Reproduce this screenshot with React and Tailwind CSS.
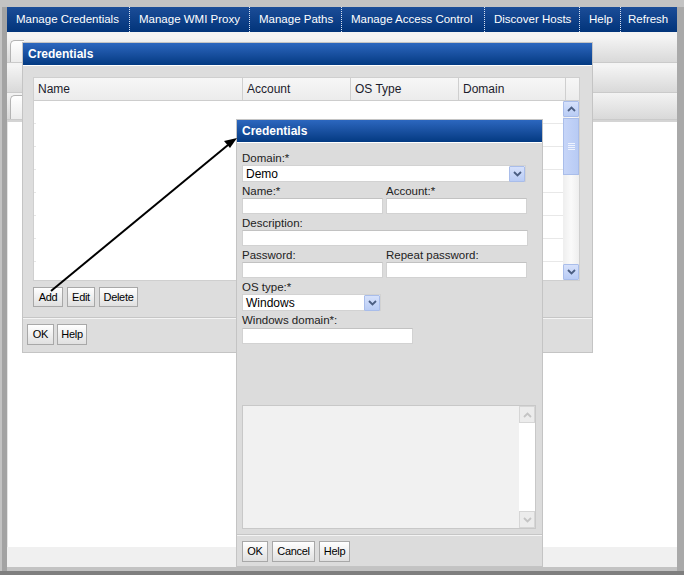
import React from 'react';

const Chevron = ({ up, color = '#4b5e82' }) => (
  <svg width="9" height="6" viewBox="0 0 9 6">
    <path d={up ? 'M1 5 L4.5 1.5 L8 5' : 'M1 1 L4.5 4.5 L8 1'} fill="none" stroke={color} strokeWidth="1.8" />
  </svg>
);

const BlueBtn = ({ up }) => (
  <div className="w-[16px] h-[16px] flex items-center justify-center border border-[#a9bdea] bg-gradient-to-b from-[#d6e1fb] to-[#b9ccf5] rounded-[1px]">
    <Chevron up={up} />
  </div>
);

const Btn = ({ w, h = 'h-[21px]', children }) => (
  <div
    className={`${w} ${h} flex items-center justify-center border border-[#a8a8a8] bg-gradient-to-b from-white to-[#e0e0e0] text-[11px] tracking-[-0.3px] text-black`}
  >
    {children}
  </div>
);

const Label = ({ children, w = '', h = 'h-[16px]' }) => (
  <div className={`${w} ${h} leading-[18px] text-[11.5px] text-[#222]`}>{children}</div>
);

const Input = ({ w }) => (
  <div className={`${w} h-[16px] bg-white border border-[#d2d2d2] border-t-[#c2c2c2]`} />
);

const Select = ({ w, value }) => (
  <div className={`${w} h-[17px] bg-white border border-[#d2d2d2] flex items-center justify-between`}>
    <span className="pl-[3px] text-[12px] text-black leading-none">{value}</span>
    <BlueBtn />
  </div>
);

const navItems = [
  ['Manage Credentials', 'w-[123px]'],
  ['Manage WMI Proxy', 'w-[120px]'],
  ['Manage Paths', 'w-[92px]'],
  ['Manage Access Control', 'w-[143px]'],
  ['Discover Hosts', 'w-[95px]'],
  ['Help', 'w-[41px]'],
];

const Band = ({ h, tab }) => (
  <div className={`${h} flex bg-gradient-to-b from-[#f3f3f3] via-[#e6e6e6] to-[#d9d9d9] border-b border-[#cacaca]`}>
    {tab && (
      <div className="ml-[3px] mt-[2px] w-[14px] rounded-tl-[5px] border-l border-t border-[#b4b4b4] bg-gradient-to-b from-white to-[#ececec]" />
    )}
  </div>
);

export default function App() {
  const rows = [0, 1, 2, 3, 4, 5, 6];
  return (
    <div className="relative w-[684px] h-[575px] bg-[#c3c3c3] flex flex-col font-['Liberation_Sans',Arial,sans-serif]">
      <div className="flex h-[571px]">
        <div className="w-[2px]" />
        <div className="w-[5px] mt-[7px] bg-[#a3a3a3]" />
        <div className="mt-[7px] w-[670px] h-[560px] bg-white relative flex flex-col overflow-hidden">
          {/* top menu */}
          <div className="h-[25px] flex bg-gradient-to-b from-[#1b4d98] to-[#02347a] text-white text-[11.5px]">
            {navItems.map(([t, w]) => (
              <div key={t} className={`${w} flex items-center pl-[9px] border-r border-dotted border-[#d8e2f2]`}>
                {t}
              </div>
            ))}
            <div className="flex-1 flex items-center pl-[7px]">Refresh</div>
          </div>

          {/* tab strips */}
          <div className="h-[90px] flex flex-col bg-[#f4f4f4]">
            <div className="h-[6px]" />
            <Band h="h-[25px]" tab />
            <div className="h-[4px]" />
            <Band h="h-[26px]" />
            <Band h="h-[27px]" tab />
            <div className="h-[2px] bg-[#d4d4d4]" />
          </div>

          <div className="flex-1 flex">
            <div className="w-[1px] bg-[#e4e4e4]" />
          </div>
          <div className="h-[20px] bg-[#f0f0f0]" />

          {/* Credentials list dialog */}
          <div className="absolute left-[15px] top-[35px] w-[571px] h-[311px] border border-[#c4c4c4] bg-[#dddddd] flex flex-col">
            <div className="h-[23px] flex items-center pl-[5px] bg-gradient-to-b from-[#2c67bf] to-[#033a82] text-white text-[12px] font-bold border-b border-white">
              Credentials
            </div>
            <div className="pl-[10px] pt-[11px] flex flex-col">
              <div className="w-[547px] h-[204px] border border-[#cfcfcf] flex flex-col bg-white">
                <div className="h-[23px] flex bg-gradient-to-b from-[#f7f7f7] to-[#ececec] border-b border-[#cdcdcd] text-[12px] text-[#1c1c2c]">
                  <div className="w-[209px] pl-[4px] flex items-center border-r border-[#cfcfcf]">Name</div>
                  <div className="w-[108px] pl-[4px] flex items-center border-r border-[#cfcfcf]">Account</div>
                  <div className="w-[108px] pl-[4px] flex items-center border-r border-[#cfcfcf]">OS Type</div>
                  <div className="w-[107px] pl-[4px] flex items-center border-r border-[#cfcfcf]">Domain</div>
                  <div className="flex-1" />
                </div>
                <div className="flex-1 flex">
                  <div className="flex-1 flex flex-col">
                    {rows.map((r) => (
                      <div key={r} className="h-[23px] flex">
                        <div className="w-[2px] border-b border-[#e6e6e6]" />
                        <div className="flex-1" />
                        <div className="w-[107px] border-b border-[#e8e8e8]" />
                      </div>
                    ))}
                  </div>
                  <div className="w-[16px] flex flex-col bg-gradient-to-r from-[#eeeeee] via-[#fafafa] to-[#eeeeee]">
                    <BlueBtn up />
                    <div className="h-[57px] mt-[1px] border border-[#a9bdea] bg-gradient-to-r from-[#c6d5f8] to-[#b8cbf4] flex items-center justify-center">
                      <div className="flex flex-col gap-[1px]">
                        <div className="w-[7px] h-[1px] bg-[#eef3fe]" />
                        <div className="w-[7px] h-[1px] bg-[#eef3fe]" />
                        <div className="w-[7px] h-[1px] bg-[#eef3fe]" />
                        <div className="w-[7px] h-[1px] bg-[#eef3fe]" />
                      </div>
                    </div>
                    <div className="flex-1" />
                    <BlueBtn />
                  </div>
                </div>
              </div>
              <div className="mt-[6px] flex gap-[4px]">
                <Btn w="w-[30px]" h="h-[20px]">Add</Btn>
                <Btn w="w-[28px]" h="h-[20px]">Edit</Btn>
                <Btn w="w-[39px]" h="h-[20px]">Delete</Btn>
              </div>
            </div>
            <div className="mt-[10px] border-t border-[#c6c6c6] border-b border-b-[#f4f4f4]" />
            <div className="pl-[4px] pt-[5px] flex gap-[3px]">
              <Btn w="w-[27px]">OK</Btn>
              <Btn w="w-[30px]">Help</Btn>
            </div>
          </div>

          {/* Credentials edit dialog */}
          <div className="absolute left-[229px] top-[112px] w-[307px] h-[448px] border border-[#c4c4c4] bg-[#dcdcdc] flex flex-col">
            <div className="h-[23px] flex items-center pl-[5px] bg-gradient-to-b from-[#2c67bf] to-[#033a82] text-white text-[12px] font-bold border-b border-white">
              Credentials
            </div>
            <div className="px-[5px] pt-[6px] flex flex-col">
              <Label>Domain:*</Label>
              <Select w="w-[284px]" value="Demo" />
              <div className="flex gap-[3px]">
                <Label w="w-[141px]">Name:*</Label>
                <Label>Account:*</Label>
              </div>
              <div className="flex gap-[3px]">
                <Input w="w-[141px]" />
                <Input w="w-[141px]" />
              </div>
              <Label>Description:</Label>
              <Input w="w-[286px]" />
              <div className="flex gap-[3px]">
                <Label w="w-[141px]">Password:</Label>
                <Label>Repeat password:</Label>
              </div>
              <div className="flex gap-[3px]">
                <Input w="w-[141px]" />
                <Input w="w-[141px]" />
              </div>
              <Label>OS type:*</Label>
              <Select w="w-[139px]" value="Windows" />
              <Label h="h-[17px]">Windows domain*:</Label>
              <Input w="w-[171px]" />
              <div className="mt-[61px] w-[294px] h-[124px] border border-[#c8c8c8] bg-[#f1f1f1] flex justify-end">
                <div className="w-[16px] bg-white flex flex-col justify-between">
                  <div className="h-[17px] border border-[#d6d6d6] bg-[#ececec] flex items-center justify-center">
                    <Chevron up color="#c4c4c4" />
                  </div>
                  <div className="h-[17px] border border-[#d6d6d6] bg-[#ececec] flex items-center justify-center">
                    <Chevron color="#c4c4c4" />
                  </div>
                </div>
              </div>
            </div>
            <div className="mt-[5px] border-t border-[#c6c6c6] border-b border-b-[#f4f4f4]" />
            <div className="pl-[5px] pt-[5px] flex gap-[4px]">
              <Btn w="w-[26px]">OK</Btn>
              <Btn w="w-[43px]">Cancel</Btn>
              <Btn w="w-[31px]">Help</Btn>
            </div>
          </div>
        </div>
        <div className="w-[7px] mt-[7px] bg-[#a9a9a9]" />
      </div>
      <div className="h-[4px] bg-[#7f7f7f]" />

      {/* callout arrow */}
      <svg className="absolute left-0 top-0 pointer-events-none" width="684" height="575" viewBox="0 0 684 575">
        <line x1="51" y1="291" x2="228" y2="145" stroke="#000" strokeWidth="2" />
        <polygon points="237,138 224,141 230,148" fill="#000" />
      </svg>
    </div>
  );
}
